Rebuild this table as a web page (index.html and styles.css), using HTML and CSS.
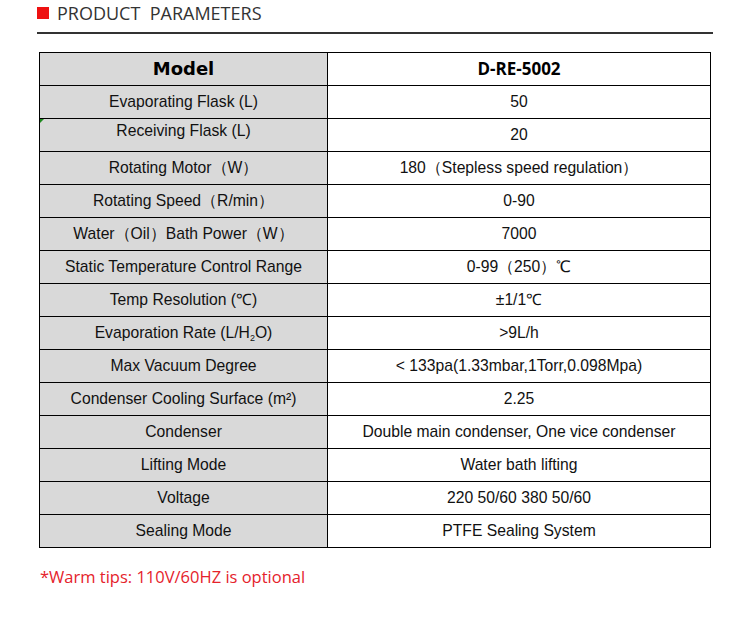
FILE: index.html
```html
<!DOCTYPE html>
<html>
<head>
<meta charset="utf-8">
<link rel="stylesheet" href="styles.css">
</head>
<body>
<div class="page">
  <div class="heading">
    <span class="mark"></span>
    <span class="title">PRODUCT&nbsp; PARAMETERS</span>
  </div>
  <table class="params">
    <tr class="head">
      <td class="k model">Model</td>
      <td class="v code">D-RE-5002</td>
    </tr>
    <tr><td class="k">Evaporating Flask (L)</td><td class="v">50</td></tr>
    <tr><td class="k raised">Receiving Flask (L)</td><td class="v">20</td></tr>
    <tr><td class="k">Rotating Motor（W）</td><td class="v">180（Stepless speed regulation）</td></tr>
    <tr><td class="k">Rotating Speed（R/min）</td><td class="v">0-90</td></tr>
    <tr><td class="k">Water（Oil）Bath Power（W）</td><td class="v">7000</td></tr>
    <tr><td class="k">Static Temperature Control Range</td><td class="v">0-99（250）℃</td></tr>
    <tr><td class="k">Temp Resolution (℃)</td><td class="v">±1/1℃</td></tr>
    <tr><td class="k">Evaporation Rate (L/H<sub>2</sub>O)</td><td class="v">&gt;9L/h</td></tr>
    <tr><td class="k">Max Vacuum Degree</td><td class="v">&lt; 133pa(1.33mbar,1Torr,0.098Mpa)</td></tr>
    <tr><td class="k">Condenser Cooling Surface (m²)</td><td class="v">2.25</td></tr>
    <tr><td class="k">Condenser</td><td class="v">Double main condenser, One vice condenser</td></tr>
    <tr><td class="k">Lifting Mode</td><td class="v">Water bath lifting</td></tr>
    <tr><td class="k">Voltage</td><td class="v">220 50/60 380 50/60</td></tr>
    <tr><td class="k">Sealing Mode</td><td class="v">PTFE Sealing System</td></tr>
  </table>
  <p class="tips">*Warm tips: 110V/60HZ is optional</p>
</div>
</body>
</html>
```
FILE: styles.css
```css
html, body {
  margin: 0;
  padding: 0;
  background: #fff;
}

.page {
  padding: 0 0 0 37px;
  width: 676px;
}

.heading {
  display: flex;
  align-items: center;
  box-sizing: border-box;
  height: 34px;
  padding-bottom: 6px;
  border-bottom: 2px solid #333;
}

.mark {
  width: 12px;
  height: 12px;
  background: #ee1111;
  margin-right: 8px;
  flex: none;
}

.title {
  font-family: "Open Sans", sans-serif;
  font-size: 18px;
  color: #333;
  line-height: 20px;
}

.params {
  margin: 18px 0 0 2px;
  border-collapse: collapse;
  width: 672px;
  font-family: "Liberation Sans", Arial, sans-serif;
  font-size: 15.7px;
  color: #111;
  table-layout: fixed;
}

.params td {
  border: 1px solid #000;
  height: 33px;
  padding: 0 4px;
  text-align: center;
  vertical-align: middle;
  line-height: 18px;
  box-sizing: border-box;
}

.params .k {
  width: 288px;
  background: #d9d9d9;
}

.params .v {
  background: #fff;
}

.params .model {
  font-family: "DejaVu Sans", sans-serif;
  font-weight: bold;
  font-size: 18px;
  color: #000;
}

.params .code {
  font-family: "Open Sans", sans-serif;
  font-weight: bold;
  font-size: 17px;
  color: #000;
}

.params .raised {
  vertical-align: top;
  padding-top: 3px;
  position: relative;
}

.params .raised::before {
  content: "";
  position: absolute;
  left: 0;
  top: 0;
  border-top: 4px solid #1e8a1e;
  border-right: 4px solid transparent;
}

.params sub {
  font-size: 9px;
  line-height: 0;
  vertical-align: -3px;
}

.tips {
  margin: 17px 0 0 3px;
  font-family: "Open Sans", sans-serif;
  font-size: 16.5px;
  color: #e5222b;
}
```
